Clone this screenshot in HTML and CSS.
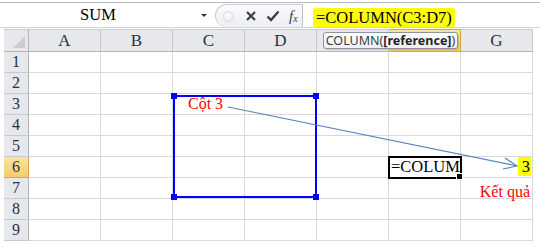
FILE: index.html
```html
<!DOCTYPE html>
<html lang="vi">
<head>
  <meta charset="UTF-8">
  <meta name="viewport" content="width=device-width, initial-scale=1.0">
  <title>COLUMN</title>
  <link rel="stylesheet" href="styles.css">
</head>
<body>
  <div class="formula-bar">
    <div class="name-box">
      <span class="name">SUM</span>
      <span class="drop"></span>
    </div>
    <div class="fx-group">
      <span class="knob"></span>
      <svg class="btn" width="12" height="12" viewBox="0 0 12 12"><path d="M2 2 L10 10 M10 2 L2 10" stroke="#3a3f46" stroke-width="2.2"/></svg>
      <svg class="btn" width="14" height="12" viewBox="0 0 14 12"><path d="M1.5 6.5 L5 10 L12.5 1.5" stroke="#3a3f46" stroke-width="2.4" fill="none"/></svg>
      <span class="fx">f<sub>x</sub></span>
    </div>
    <div class="formula-input">
      <span class="marker">=COLUMN(C3:D7)</span>
    </div>
  </div>

  <div class="sheet">
    <div class="grid">
      <div class="corner"></div>
      <div class="col-head">A</div>
      <div class="col-head">B</div>
      <div class="col-head">C</div>
      <div class="col-head">D</div>
      <div class="col-head"></div>
      <div class="col-head active"></div>
      <div class="col-head">G</div>

      <div class="row-head">1</div>
      <div class="cell"></div><div class="cell"></div><div class="cell"></div><div class="cell"></div><div class="cell"></div><div class="cell"></div><div class="cell"></div>
      <div class="row-head">2</div>
      <div class="cell"></div><div class="cell"></div><div class="cell"></div><div class="cell"></div><div class="cell"></div><div class="cell"></div><div class="cell"></div>
      <div class="row-head">3</div>
      <div class="cell"></div><div class="cell"></div><div class="cell note">Cột 3</div><div class="cell"></div><div class="cell"></div><div class="cell"></div><div class="cell"></div>
      <div class="row-head">4</div>
      <div class="cell"></div><div class="cell"></div><div class="cell"></div><div class="cell"></div><div class="cell"></div><div class="cell"></div><div class="cell"></div>
      <div class="row-head">5</div>
      <div class="cell"></div><div class="cell"></div><div class="cell"></div><div class="cell"></div><div class="cell"></div><div class="cell"></div><div class="cell"></div>
      <div class="row-head active">6</div>
      <div class="cell"></div><div class="cell"></div><div class="cell"></div><div class="cell"></div><div class="cell"></div>
      <div class="cell current">=COLUM<span class="caret"></span></div>
      <div class="cell number"><span class="marker">3</span></div>
      <div class="row-head">7</div>
      <div class="cell"></div><div class="cell"></div><div class="cell"></div><div class="cell"></div><div class="cell"></div><div class="cell"></div><div class="cell result">Kết quả</div>
      <div class="row-head">8</div>
      <div class="cell"></div><div class="cell"></div><div class="cell"></div><div class="cell"></div><div class="cell"></div><div class="cell"></div><div class="cell"></div>
      <div class="row-head">9</div>
      <div class="cell"></div><div class="cell"></div><div class="cell"></div><div class="cell"></div><div class="cell"></div><div class="cell"></div><div class="cell"></div>
    </div>

    <div class="range">
      <span class="handle tl"></span><span class="handle tr"></span>
      <span class="handle bl"></span><span class="handle br"></span>
    </div>

    <svg class="arrow" width="540" height="212" viewBox="0 0 540 212">
      <path d="M228 78 L517 137" stroke="#5a86bd" stroke-width="1.2" fill="none"/>
      <path d="M505 129 L517 137 L503 140" stroke="#5a86bd" stroke-width="1.2" fill="none"/>
    </svg>

    <div class="tooltip">COLUMN(<b>[reference]</b>)</div>
  </div>
</body>
</html>
```

FILE: styles.css
```css
body {
  margin: 0;
  background: #fff;
  font-family: "Liberation Serif", "Times New Roman", serif;
  color: #000;
}

/* formula bar */
.formula-bar {
  display: flex;
  margin-top: 2px;
  margin-bottom: 1px;
  height: 24px;
  border-top: 1px solid #b4bcc6;
  border-bottom: 1px solid #d0d4da;
}
.name-box {
  display: flex;
  align-items: center;
  width: 212px;
}
.name {
  width: 196px;
  text-align: center;
  font-size: 16.5px;
}
.drop {
  width: 0;
  height: 0;
  margin-left: 5px;
  border-left: 3px solid transparent;
  border-right: 3px solid transparent;
  border-top: 3px solid #333;
}
.fx-group {
  display: flex;
  align-items: center;
  gap: 9px;
  width: 88px;
  margin: 1px 0 0 3px;
  padding-left: 7px;
  box-sizing: border-box;
  border: 1px solid #c8cdd4;
  border-right-color: #b9c0c9;
  border-bottom: none;
  border-radius: 12px 0 0 12px;
  background: linear-gradient(#fbfbfc, #eceef1);
}
.knob {
  width: 9px;
  height: 9px;
  border-radius: 50%;
  border: 1px solid #d9dde2;
  background: radial-gradient(circle at 40% 40%, #fff, #dfe2e6);
  margin-right: 2px;
}
.btn {
  display: block;
}
.fx {
  font-style: italic;
  font-size: 15px;
  color: #3a3f46;
}
.fx sub {
  font-size: 10px;
  vertical-align: -1px;
}
.formula-input {
  flex: 1;
  display: flex;
  align-items: flex-end;
  padding-left: 10px;
  font-size: 16.5px;
}
.formula-input .marker {
  padding: 1px 3px 0 3px;
  line-height: 18px;
}
.marker {
  background: #ffff00;
  border-radius: 2px;
}

/* sheet */
.sheet {
  position: relative;
  padding-left: 4px;
}
.grid {
  display: grid;
  grid-template-columns: 25px repeat(7, 72px);
  grid-template-rows: 23px repeat(9, 21px);
}
.corner,
.col-head,
.row-head {
  background: #e6e8eb;
  color: #263248;
  box-sizing: border-box;
  font-size: 17px;
}
.corner {
  position: relative;
  border-right: 1px solid #aeb5be;
  border-bottom: 1px solid #aeb5be;
  border-top: 1px solid #c7ccd3;
}
.corner::after {
  content: "";
  position: absolute;
  right: 3px;
  bottom: 3px;
  border-left: 12px solid transparent;
  border-bottom: 12px solid #c9cdd2;
}
.col-head {
  display: flex;
  align-items: center;
  justify-content: center;
  border-top: 1px solid #c7ccd3;
  border-right: 1px solid #c6cbd2;
  border-bottom: 1px solid #aeb5be;
}
.row-head {
  display: flex;
  align-items: center;
  justify-content: center;
  border-right: 1px solid #aeb5be;
  border-bottom: 1px solid #c6cbd2;
  font-size: 16px;
}
.col-head.active,
.row-head.active {
  background: linear-gradient(#fbe3a0, #f6cc6b);
  border-color: #e3a23e;
}
.cell {
  box-sizing: border-box;
  border-right: 1px solid #d8d8d8;
  border-bottom: 1px solid #d8d8d8;
  font-size: 16px;
  line-height: 20px;
  white-space: nowrap;
}
.note {
  color: #ff0000;
  padding-left: 15px;
  font-size: 16px;
}
.current {
  position: relative;
  outline: 2px solid #000;
  outline-offset: -1px;
  padding-left: 2px;
  font-size: 16.5px;
  z-index: 2;
}
.current::after {
  content: "";
  position: absolute;
  right: -3px;
  bottom: -3px;
  width: 5px;
  height: 5px;
  background: #000;
  border: 1px solid #fff;
}
.caret {
  display: inline-block;
  width: 1px;
  height: 16px;
  margin-left: 1px;
  background: #000;
  vertical-align: -2px;
}
.number {
  text-align: right;
  padding-right: 1px;
  font-size: 16.5px;
}
.number .marker {
  display: inline-block;
  padding: 0 1px 0 4px;
  line-height: 19px;
  border-radius: 0;
}
.result {
  color: #ff0000;
  text-align: right;
  padding-right: 2px;
  padding-top: 4px;
  font-size: 16px;
}

/* overlays */
.range {
  position: absolute;
  left: 173px;
  top: 66px;
  width: 144px;
  height: 103px;
  box-sizing: border-box;
  border: 2px solid #0000ff;
}
.handle {
  position: absolute;
  width: 6px;
  height: 6px;
  background: #0000ff;
}
.tl { left: -4px; top: -4px; }
.tr { right: -4px; top: -4px; }
.bl { left: -4px; bottom: -4px; }
.br { right: -4px; bottom: -4px; }
.arrow {
  position: absolute;
  left: 0;
  top: 0;
  pointer-events: none;
}
.tooltip {
  position: absolute;
  left: 323px;
  top: 3px;
  width: 135px;
  height: 17px;
  box-sizing: border-box;
  border: 1px solid #8f959c;
  border-radius: 3px;
  background: linear-gradient(#ffffff, #eef0f3);
  box-shadow: 1px 1px 1px rgba(0, 0, 0, 0.15);
  font-family: "Noto Sans", "Open Sans", sans-serif;
  font-size: 12.5px;
  line-height: 15px;
  color: #3b3f45;
  text-align: center;
  white-space: nowrap;
}
.tooltip b {
  color: #1f2328;
}
```
